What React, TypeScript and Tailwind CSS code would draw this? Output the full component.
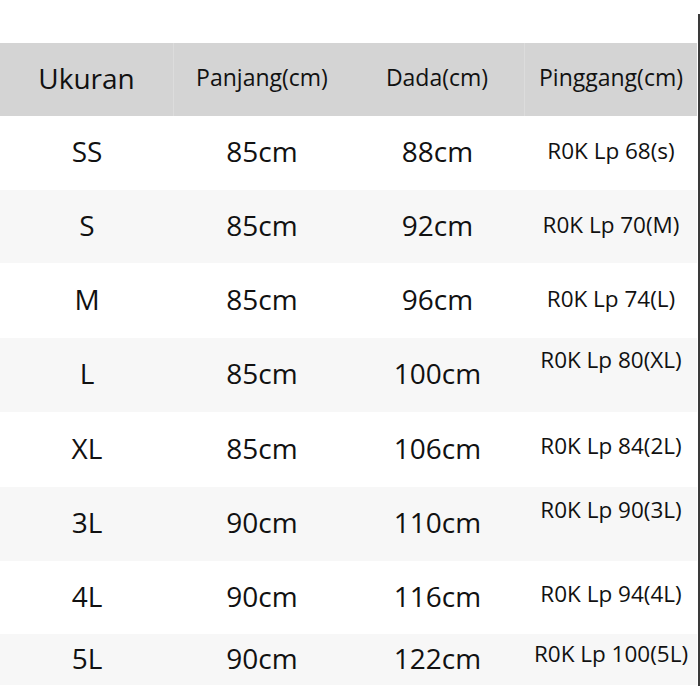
import React from "react";

type Row = {
  size: string;
  panjang: string;
  dada: string;
  rok: string;
  h: string;
  bg: string;
  rokPad: string;
};

const rows: Row[] = [
  { size: "SS", panjang: "85cm", dada: "88cm", rok: "R0K Lp 68(s)", h: "h-[74px]", bg: "bg-white", rokPad: "pb-[4px]" },
  { size: "S", panjang: "85cm", dada: "92cm", rok: "R0K Lp 70(M)", h: "h-[73px]", bg: "bg-[#f7f7f7]", rokPad: "pb-[4px]" },
  { size: "M", panjang: "85cm", dada: "96cm", rok: "R0K Lp 74(L)", h: "h-[75px]", bg: "bg-white", rokPad: "pb-[4px]" },
  { size: "L", panjang: "85cm", dada: "100cm", rok: "R0K Lp 80(XL)", h: "h-[74px]", bg: "bg-[#f7f7f7]", rokPad: "pb-[30px]" },
  { size: "XL", panjang: "85cm", dada: "106cm", rok: "R0K Lp 84(2L)", h: "h-[75px]", bg: "bg-white", rokPad: "pb-[8px]" },
  { size: "3L", panjang: "90cm", dada: "110cm", rok: "R0K Lp 90(3L)", h: "h-[74px]", bg: "bg-[#f7f7f7]", rokPad: "pb-[28px]" },
  { size: "4L", panjang: "90cm", dada: "116cm", rok: "R0K Lp 94(4L)", h: "h-[73px]", bg: "bg-white", rokPad: "pb-[8px]" },
  { size: "5L", panjang: "90cm", dada: "122cm", rok: "R0K Lp 100(5L)", h: "h-[51px]", bg: "bg-[#f7f7f7]", rokPad: "pb-[12px]" },
];

export default function App() {
  return (
    <div
      className="w-[700px] h-[700px] bg-white flex text-[#111111] overflow-hidden"
      style={{ fontFamily: '"Open Sans", "Noto Sans", sans-serif' }}
    >
      <div className="w-[697px] pt-[43px] flex flex-col">
        {/* header */}
        <div className="h-[73px] bg-[#d4d4d4] grid grid-cols-[174px_176px_175px_172px]">
          <div className="flex items-center justify-center pb-[4px] text-[28px] border-r border-[#dcdcdc]">
            Ukuran
          </div>
          <div className="flex items-center justify-center pb-[4px] text-[23px]">
            Panjang(cm)
          </div>
          <div className="flex items-center justify-center pb-[4px] text-[23px] border-r border-[#dcdcdc]">
            Dada(cm)
          </div>
          <div className="flex items-center justify-center pb-[4px] text-[23px]">
            Pinggang(cm)
          </div>
        </div>

        {/* body rows */}
        {rows.map((r) => (
          <div
            key={r.size}
            className={`${r.h} ${r.bg} grid grid-cols-[174px_176px_175px_172px]`}
          >
            <div className="flex items-center justify-center pb-[4px] text-[28px]">{r.size}</div>
            <div className="flex items-center justify-center pb-[4px] text-[28px]">{r.panjang}</div>
            <div className="flex items-center justify-center pb-[4px] text-[28px]">{r.dada}</div>
            <div className={`flex items-center justify-center text-[22.5px] whitespace-nowrap ${r.rokPad}`}>
              {r.rok}
            </div>
          </div>
        ))}
      </div>
      <div className="w-px" />
      <div className="w-[2px] h-[672px] mt-[14px] bg-[#3a3a3a]" />
    </div>
  );
}
